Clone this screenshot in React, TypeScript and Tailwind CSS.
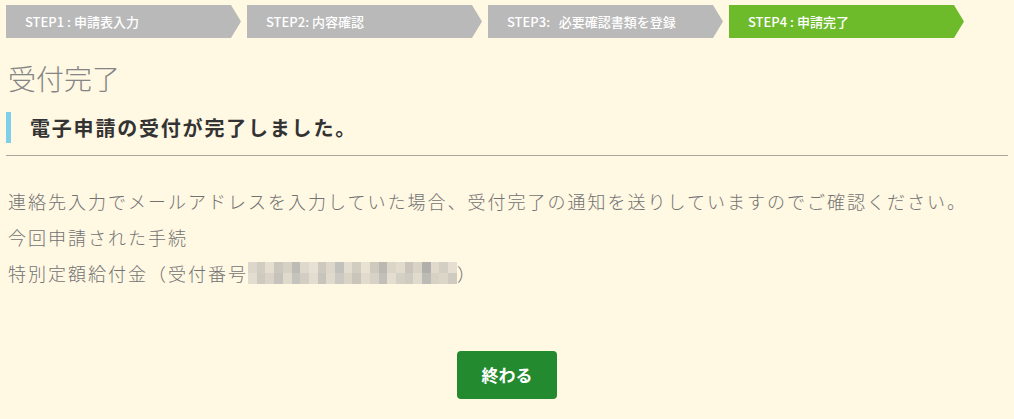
const steps = [
  { label: "STEP1 : 申請表入力", active: false },
  { label: "STEP2: 内容確認", active: false },
  { label: "STEP3:   必要確認書類を登録", active: false },
  { label: "STEP4 : 申請完了", active: true },
];

// pixelated blur standing in for the hidden receipt number
const blurTop = [
  "#dcd7ca", "#d2cdc1", "#e4dfd1", "#cbc7bd", "#d6d1c5", "#bcbbb4", "#dfd9cb", "#e7e1d3",
  "#cdc9bf", "#ddd7c9", "#c2c2bc", "#e3ddcf", "#d2cdc1", "#e8e2d3", "#cfcabe", "#bab8b1",
  "#dbd5c7", "#e2dccd", "#c9c5bc", "#d9d3c6", "#b1afab", "#e0dacc", "#d4cfc3", "#e5dfd1",
];
const blurBottom = [
  "#e2ddd0", "#cfcac0", "#d9d4c7", "#c5c3bb", "#dfdacc", "#c4c3bc", "#d3cec3", "#e3ddcf",
  "#c7c4bb", "#e0dacc", "#cbc9c2", "#dad4c7", "#c9c5bb", "#e1dbcd", "#d7d2c5", "#c1bfb8",
  "#e4ded0", "#d5d0c4", "#cfcbc1", "#e1dbcd", "#bdbbb5", "#d8d2c5", "#dcd6c9", "#d0cbc0",
];

export default function App() {
  return (
    <div
      className="min-h-[419px] bg-[#fff8e3] px-[6px] pt-[5px]"
      style={{ fontFamily: '"Noto Sans CJK JP", "Noto Sans", sans-serif' }}
    >
      <div className="flex gap-[6px]">
        {steps.map((s) => (
          <div
            key={s.label}
            className={`flex h-[33px] w-[235px] items-center whitespace-pre pl-[19px] text-[13px] font-medium text-white [clip-path:polygon(0_0,calc(100%_-_10px)_0,100%_50%,calc(100%_-_10px)_100%,0_100%)] ${
              s.active ? "bg-[#6dbb2b]" : "bg-[#b9b9b9]"
            }`}
          >
            {s.label}
          </div>
        ))}
      </div>

      <h1 className="mt-[20px] pl-[2px] text-[28px] font-light leading-[40px] text-[#858585]">
        受付完了
      </h1>

      <h2 className="mt-[14px] border-l-[5px] border-[#7fcfe9] pl-[19px] text-[20px] font-bold leading-[31px] tracking-[1.8px] text-[#333333]">
        電子申請の受付が完了しました。
      </h2>

      <hr className="mt-[12px] border-t border-[#a9a6a0]" />

      <div className="mt-[27px] pl-[2px] text-[18px] font-light leading-[36px] tracking-[2px] text-[#727272]">
        <p>連絡先入力でメールアドレスを入力していた場合、受付完了の通知を送りしていますのでご確認ください。</p>
        <p>今回申請された手続</p>
        <p className="flex items-center">
          <span>特別定額給付金（受付番号</span>
          <span className="flex h-[22px] w-[209px] flex-col">
            <span className="flex flex-1">
              {blurTop.map((c, i) => (
                <span key={i} className="h-full flex-1" style={{ backgroundColor: c }} />
              ))}
            </span>
            <span className="flex flex-1">
              {blurBottom.map((c, i) => (
                <span key={i} className="h-full flex-1" style={{ backgroundColor: c }} />
              ))}
            </span>
          </span>
          <span>）</span>
        </p>
      </div>

      <div className="mt-[60px] flex justify-center">
        <button className="h-[48px] w-[100px] rounded-[4px] bg-[#248a30] text-[17px] font-bold text-white">
          終わる
        </button>
      </div>
    </div>
  );
}
